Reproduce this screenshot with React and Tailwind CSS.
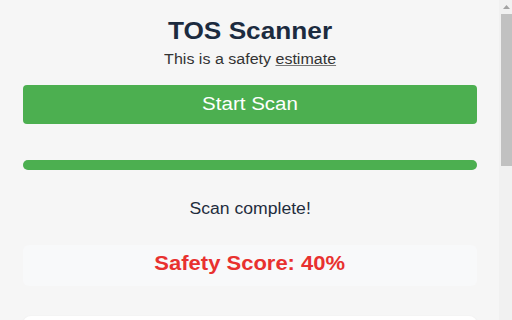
import React from "react";

function Scrollbar() {
  return (
    <div className="flex h-[320px] w-[13px] shrink-0 flex-col bg-[#f1f1f1]">
      <div className="flex h-[14px] items-center justify-center pl-[2px]">
        <svg width="7" height="4" viewBox="0 0 7 4">
          <path d="M3.5 0 L7 4 L0 4 Z" fill="#a3a3a3" />
        </svg>
      </div>
      <div className="ml-[2px] h-[152px] w-[11px] bg-[#c1c1c1]" />
    </div>
  );
}

export default function App() {
  return (
    <div className="flex h-[320px] w-[512px] overflow-hidden bg-[#f6f6f6] [font-family:'Liberation_Sans',Arial,sans-serif]">
      <div className="flex-1 overflow-hidden">
        <div className="flex flex-col pl-[23px] pr-[22px] pt-[17px] pb-[20px]">
          <h1 className="text-center text-[23px] leading-[28px] font-bold text-[#1c2b3f]">
            <span className="inline-block scale-x-[1.14]">TOS Scanner</span>
          </h1>
          <p className="mt-[6px] text-center text-[14px] leading-[17px] text-[#333333]">
            <span className="inline-block scale-x-[1.145]">
              This is a safety <span className="underline decoration-[#777]">estimate</span>
            </span>
          </p>
          <button className="mt-[17px] h-[39px] w-full rounded-[4px] bg-[#4caf50] text-[18px] text-white">
            <span className="inline-block scale-x-[1.14]">Start Scan</span>
          </button>
          <div className="mt-[36px] h-[10px] w-full rounded-full bg-[#e0e0e0]">
            <div className="h-full rounded-full bg-[#4caf50]" style={{ width: "100%" }} />
          </div>
          <p className="mt-[30px] text-center text-[16px] leading-[18px] text-[#1f2d3d]">
            <span className="inline-block scale-x-[1.1]">Scan complete!</span>
          </p>
          <div className="mt-[27px] flex h-[41px] items-center justify-center rounded-[6px] bg-[#f8f9fa] pb-[5px]">
            <span className="inline-block scale-x-[1.1] text-[20px] font-bold text-[#e8312f]">
              Safety Score: 40%
            </span>
          </div>
          <div className="mt-[30px] h-[280px] rounded-[8px] bg-white shadow-[0_1px_3px_rgba(0,0,0,0.08)]" />
        </div>
      </div>
      <Scrollbar />
    </div>
  );
}
